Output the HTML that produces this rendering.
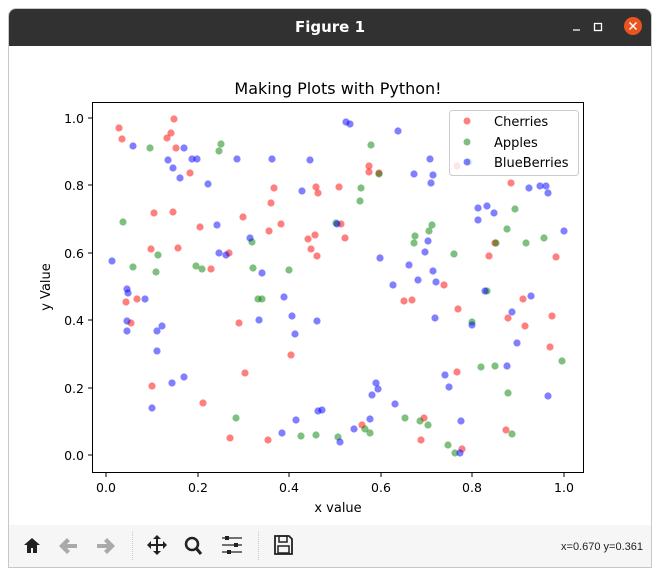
<!DOCTYPE html>
<html><head><meta charset="utf-8"><style>
body{margin:0;width:660px;height:577px;background:#fff;overflow:hidden;font-family:"DejaVu Sans","Liberation Sans",sans-serif}
.win{position:absolute;left:8px;top:8px;width:642px;height:558px;border:1px solid #c8c8c8;border-radius:8px 8px 0 0;overflow:hidden;background:#fff}
.tb{position:absolute;left:0;top:0;width:100%;height:37px;background:#323131;color:#fff;font:bold 15px "DejaVu Sans",sans-serif;text-align:center;line-height:37px}
.tool{position:absolute;left:0;top:516px;width:100%;height:42px;background:#f6f6f6}
</style></head><body>
<div class="win">
<div class="tb">Figure 1</div>
<svg style="position:absolute;left:0;top:0" width="642" height="37">
<line x1="564" y1="21" x2="571" y2="21" stroke="#fff" stroke-width="1.3"/>
<rect x="585.5" y="14.5" width="7" height="7" fill="none" stroke="#fff" stroke-width="1.3"/>
<circle cx="624" cy="17" r="9" fill="#e95420"/>
<path d="M620.5 13.5l7 7M627.5 13.5l-7 7" stroke="#fff" stroke-width="1.5"/>
</svg>
<div class="tool">
<svg width="642" height="42">
<path d="M15 20l8-7 8 7h-3v8h-4v-5h-2v5h-4v-8z" fill="#222"/>
<path d="M50 21l8-8 3 3-3 3h10v4h-10l3 3-3 3z" fill="#aaa"/>
<path d="M106 21l-8-8-3 3 3 3h-10v4h10l-3 3 3 3z" fill="#aaa"/>
<line x1="123.5" y1="6" x2="123.5" y2="36" stroke="#ccc" stroke-dasharray="1 1"/>
<path d="M148 10l-4 4h3v5h-5v-3l-4 4 4 4v-3h5v5h-3l4 4 4-4h-3v-5h5v3l4-4-4-4v3h-5v-5h3z" fill="#222"/>
<circle cx="183" cy="19" r="6" fill="none" stroke="#222" stroke-width="2.5"/>
<path d="M187 23l5 6" stroke="#222" stroke-width="3"/>
<path d="M213 13h20M213 20h20M213 27h20" stroke="#222" stroke-width="1.2"/>
<rect x="216" y="11" width="4" height="4" fill="#222"/><rect x="225" y="18" width="4" height="4" fill="#222"/><rect x="218" y="25" width="4" height="4" fill="#222"/>
<line x1="249.5" y1="6" x2="249.5" y2="36" stroke="#ccc" stroke-dasharray="1 1"/>
<path d="M266 11h14l3 3v15h-17z" fill="none" stroke="#222" stroke-width="1.8"/>
<rect x="270" y="11" width="8" height="6" fill="none" stroke="#222" stroke-width="1.5"/>
<rect x="269" y="21" width="11" height="7" fill="none" stroke="#222" stroke-width="1.5"/>
<text x="634" y="25" text-anchor="end" font-family="Liberation Sans" font-size="11" fill="#222">x=0.670 y=0.361</text>
</svg></div>
</div>
<svg style="position:absolute;left:0;top:0" width="660" height="520" font-family="DejaVu Sans" font-size="13">
<text x="338" y="94" text-anchor="middle" font-size="16">Making Plots with Python!</text>
<g id="pts"></g>
<rect x="92.5" y="102.5" width="491" height="370" fill="none" stroke="#000" stroke-width="1"/>
<g stroke="#000">
<line x1="106" y1="473" x2="106" y2="477"/><line x1="198" y1="473" x2="198" y2="477"/><line x1="289" y1="473" x2="289" y2="477"/><line x1="381" y1="473" x2="381" y2="477"/><line x1="472" y1="473" x2="472" y2="477"/><line x1="564" y1="473" x2="564" y2="477"/>
<line x1="88" y1="455" x2="92" y2="455"/><line x1="88" y1="388" x2="92" y2="388"/><line x1="88" y1="320" x2="92" y2="320"/><line x1="88" y1="253" x2="92" y2="253"/><line x1="88" y1="185" x2="92" y2="185"/><line x1="88" y1="118" x2="92" y2="118"/>
</g>
<g font-size="12.5" text-anchor="middle">
<text x="106" y="492">0.0</text><text x="198" y="492">0.2</text><text x="289" y="492">0.4</text><text x="381" y="492">0.6</text><text x="472" y="492">0.8</text><text x="564" y="492">1.0</text>
</g>
<g font-size="12.5" text-anchor="end">
<text x="84" y="460">0.0</text><text x="84" y="393">0.2</text><text x="84" y="325">0.4</text><text x="84" y="258">0.6</text><text x="84" y="190">0.8</text><text x="84" y="123">1.0</text>
</g>
<text x="338" y="512" text-anchor="middle">x value</text>
<text transform="translate(50 287) rotate(-90)" text-anchor="middle">y Value</text>
<rect x="449.5" y="110.5" width="129" height="65" rx="3" fill="#fff" fill-opacity="0.8" stroke="#ccc"/>
<circle cx="467" cy="121" r="3.5" fill="#f00" fill-opacity=".5"/>
<circle cx="467" cy="142" r="3.5" fill="#008000" fill-opacity=".5"/>
<circle cx="467" cy="162" r="3.5" fill="#00f" fill-opacity=".5"/>
<text x="494" y="126">Cherries</text><text x="494" y="147">Apples</text><text x="494" y="167">BlueBerries</text>
</svg>
<script>
var R="119,128 122,139 167,138 171,133 174,119 176,148 190,173 173,212 178,248 200,227 211,269 229,253 243,217 271,203 274,188 269,231 245,373 239,323 203,403 230,438 137,299 131,323 151,249 154,213 126,302 152,386 268,440 281,224 315,235 308,239 311,249 318,193 316,187 341,224 345,238 291,355 317,256 339,187 369,166 369,172 379,173 362,425 404,301 412,300 421,440 424,418 457,166 444,285 458,309 457,372 462,449 511,183 489,256 495,243 506,430 508,318 525,326 550,347 556,257 523,299 552,316";
var G="150,148 123,222 133,267 156,272 158,255 196,266 202,269 221,144 219,151 252,242 253,268 289,270 336,223 360,201 361,188 371,145 379,174 414,243 415,236 429,231 432,225 454,254 469,162 496,243 262,299 258,299 301,436 316,435 338,437 365,429 370,433 405,418 420,421 455,453 448,445 487,291 472,322 481,367 495,366 508,393 512,434 515,209 507,229 526,243 544,238 562,361 428,425 236,418";
var B="112,261 133,146 127,289 128,293 127,321 127,331 145,299 157,351 157,331 162,326 152,408 172,383 184,377 168,160 173,168 180,178 184,148 192,159 197,159 208,184 217,225 219,253 226,255 237,159 250,238 262,273 259,320 284,297 292,316 295,334 317,321 296,420 322,410 318,411 354,429 370,419 372,395 376,383 378,389 346,122 350,124 398,131 380,258 393,285 409,265 418,280 425,252 428,241 433,271 436,282 435,318 445,375 449,387 460,453 433,175 430,159 431,183 478,220 478,208 487,206 494,213 485,291 472,325 507,366 512,312 531,296 517,343 529,188 540,186 546,186 548,193 564,231 548,396 461,421 414,174 302,191 272,159 310,160 337,224 282,433 395,404 340,442";
var h="";[[R,"#f00"],[G,"#008000"],[B,"#00f"]].forEach(function(s){s[0].split(" ").forEach(function(p){var a=p.split(",");h+='<circle cx="'+a[0]+'" cy="'+a[1]+'" r="3.6" fill="'+s[1]+'" fill-opacity=".5"/>';});});
document.getElementById("pts").innerHTML=h;
</script>
</body></html>
